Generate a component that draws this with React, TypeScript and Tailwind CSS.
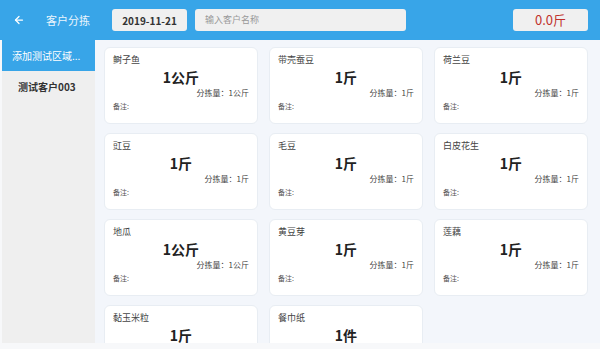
import { ArrowLeft } from "lucide-react";

interface Item {
  name: string;
  qty: string;
  sorted: string;
}

const items: Item[] = [
  { name: "鲥子鱼", qty: "1公斤", sorted: "1公斤" },
  { name: "带壳蚕豆", qty: "1斤", sorted: "1斤" },
  { name: "荷兰豆", qty: "1斤", sorted: "1斤" },
  { name: "豇豆", qty: "1斤", sorted: "1斤" },
  { name: "毛豆", qty: "1斤", sorted: "1斤" },
  { name: "白皮花生", qty: "1斤", sorted: "1斤" },
  { name: "地瓜", qty: "1公斤", sorted: "1公斤" },
  { name: "黄豆芽", qty: "1斤", sorted: "1斤" },
  { name: "莲藕", qty: "1斤", sorted: "1斤" },
  { name: "黏玉米粒", qty: "1斤", sorted: "1斤" },
  { name: "餐巾纸", qty: "1件", sorted: "1件" },
];

const font = { fontFamily: '"Noto Sans CJK SC", "Noto Sans", sans-serif' };

function Card({ item }: { item: Item }) {
  return (
    <div className="h-[77px] w-[154px] rounded-[6px] bg-white border border-[#e8edf3] px-[8px] pt-[7px] text-[#333]">
      <div className="text-[9px] leading-[10px] text-[#444]">{item.name}</div>
      <div className="mt-[4px] text-center text-[14px] font-bold leading-[16px] text-[#222]">
        {item.qty}
      </div>
      <div className="mt-[3px] text-right text-[8px] leading-[10px] text-[#444]">
        分拣量：{item.sorted}
      </div>
      <div className="mt-[3px] text-[7px] leading-[10px] text-[#555]">备注:</div>
    </div>
  );
}

export default function App() {
  return (
    <div className="h-[349px] w-[600px] overflow-hidden bg-[#f7f8fa]" style={font}>
      <div className="flex h-[40px] items-center bg-[#38a5e8]">
        <div className="flex w-[112px] items-center">
          <ArrowLeft className="ml-[13px] h-[12px] w-[12px] text-white" strokeWidth={2.5} />
          <span className="ml-[21px] text-[11px] text-[#eaf5fd]">客户分拣</span>
        </div>
        <div className="flex h-[22px] w-[75px] items-center justify-center rounded-[3px] bg-[#f0f0f0] text-[10px] font-bold text-[#333]">
          2019-11-21
        </div>
        <div className="ml-[8px] flex h-[22px] w-[211px] items-center rounded-[3px] bg-[#f0f0f0] pl-[10px] text-[9px] text-[#999]">
          输入客户名称
        </div>
        <div className="ml-auto mr-[12px] flex h-[22px] w-[75px] items-center justify-center rounded-[3px] bg-[#f0f0f0] text-[13px] text-[#c0302b]">
          0.0斤
        </div>
      </div>
      <div className="flex h-[303px] overflow-hidden">
        <div className="ml-[2px] w-[93px] shrink-0 bg-[#efefef]">
          <div className="flex h-[31px] items-center bg-[#38a5e8] pl-[10px] text-[10px] text-white">
            添加测试区域...
          </div>
          <div className="mt-[9px] pl-[16px] text-[10px] font-bold leading-[14px] text-[#333]">
            测试客户003
          </div>
        </div>
        <div className="grid flex-1 grid-cols-[154px_154px_154px] content-start gap-x-[11px] gap-y-[9px] bg-[#f3f6fb] pl-[9px] pt-[7px]">
          {items.map((it) => (
            <Card key={it.name} item={it} />
          ))}
        </div>
      </div>
    </div>
  );
}
